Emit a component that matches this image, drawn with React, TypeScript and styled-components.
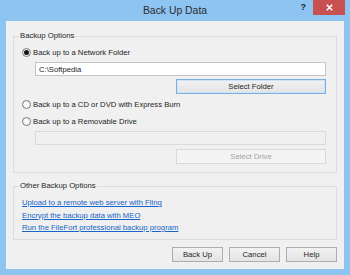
import React from "react";
import styled, { createGlobalStyle } from "styled-components";

const Global = createGlobalStyle`
  html, body { margin: 0; padding: 0; }
  body {
    width: 350px;
    height: 275px;
    overflow: hidden;
    background: #ffffff;
    font-family: "Liberation Sans", Arial, sans-serif;
  }
  * { box-sizing: border-box; }
`;

const Window = styled.div`
  width: 350px;
  height: 275px;
  background: #8ec4f2;
  display: flex;
  flex-direction: column;
  padding: 0 6px 6px 6px;
`;

const TitleBar = styled.div`
  height: 21px;
  flex: none;
  display: grid;
  grid-template-columns: 1fr auto 1fr;
  align-items: start;
`;

const Title = styled.div`
  grid-column: 2;
  font-size: 10.4px;
  line-height: 22px;
  color: #2c2c2c;
  white-space: nowrap;
`;

const Controls = styled.div`
  grid-column: 3;
  justify-self: end;
  display: flex;
  align-items: flex-start;
  margin-right: -1px;
`;

const HelpMark = styled.span`
  font-weight: bold;
  font-size: 9px;
  line-height: 15px;
  color: #1f1f1f;
  margin-right: 7px;
`;

const CloseBox = styled.div`
  width: 32px;
  height: 15px;
  background: #c75050;
  display: flex;
  align-items: center;
  justify-content: center;
`;

const Client = styled.div`
  flex: 1;
  background: #f0f0f0;
  padding: 10px 7px 7px 7px;
  display: flex;
  flex-direction: column;
`;

const Group = styled.fieldset<{ $gap?: number }>`
  margin: ${(p) => p.$gap ?? 0}px 0 0 0;
  min-width: 0;
  border: 1px solid #dcdcdc;
  padding: 0 10px ${(p) => (p.$gap ? 4.5 : 8)}px 8px;
  display: flex;
  flex-direction: column;
`;

const Legend = styled.legend`
  font-size: 7.7px;
  line-height: 10px;
  color: #1e1e1e;
  padding: 0 1px;
  margin-left: -3px;
`;

const RadioRow = styled.label<{ $top: number }>`
  margin-top: ${(p) => p.$top}px;
  height: 10px;
  display: flex;
  align-items: center;
  gap: 2px;
  font-size: 7.7px;
  color: #1e1e1e;
  white-space: nowrap;
`;

const Radio = styled.input`
  appearance: none;
  margin: 0;
  width: 9px;
  height: 9px;
  border-radius: 50%;
  border: 1px solid #7a7a7a;
  background: radial-gradient(circle, #ffffff 0%, #eaeaea 100%);
  display: grid;
  place-items: center;
  &:checked::after {
    content: "";
    width: 5px;
    height: 5px;
    border-radius: 50%;
    background: #111;
  }
`;

const TextBox = styled.input<{ $top: number }>`
  margin: ${(p) => p.$top}px 0 0 13px;
  height: 14px;
  padding: 0 3px;
  border: 1px solid ${(p) => (p.disabled ? "#dadada" : "#c4c4c4")};
  background: ${(p) => (p.disabled ? "#f0f0f0" : "#ffffff")};
  font-family: inherit;
  font-size: 7.7px;
  color: #1e1e1e;
  outline: none;
`;

const Button = styled.button<{ $default?: boolean; $wide?: boolean; $top?: number }>`
  margin: ${(p) => p.$top ?? 0}px 0 0 0;
  width: ${(p) => (p.$wide ? 150 : 51)}px;
  height: 15px;
  padding: 0;
  align-self: ${(p) => (p.$wide ? "flex-end" : "auto")};
  font-family: inherit;
  font-size: 7.7px;
  color: ${(p) => (p.disabled ? "#a3a3a3" : "#1e1e1e")};
  border: 1px solid
    ${(p) => (p.disabled ? "#d9d9d9" : p.$default ? "#78b0e6" : "#adadad")};
  background: ${(p) =>
    p.disabled ? "#f4f4f4" : "linear-gradient(#f2f2f2, #e4e4e4)"};
  box-shadow: ${(p) => (p.$default ? "inset 0 0 0 1px #cfe3f7" : "none")};
`;

const Link = styled.a`
  display: block;
  font-size: 7.7px;
  line-height: 12.5px;
  color: #1565c8;
  text-decoration: underline;
  white-space: nowrap;
`;

const Links = styled.div`
  margin-top: 6px;
  display: flex;
  flex-direction: column;
`;

const ButtonRow = styled.div`
  margin-top: 7px;
  display: flex;
  justify-content: flex-end;
  gap: 6px;
`;

const noop = () => {};

export default function App() {
  return (
    <>
      <Global />
      <Window>
        <TitleBar>
          <Title>Back Up Data</Title>
          <Controls>
            <HelpMark>?</HelpMark>
            <CloseBox>
              <svg width="7" height="7" viewBox="0 0 7 7">
                <path d="M0.8 0.8 L6.2 6.2 M6.2 0.8 L0.8 6.2" stroke="#fff" strokeWidth="1.6" />
              </svg>
            </CloseBox>
          </Controls>
        </TitleBar>
        <Client>
          <Group>
            <Legend>Backup Options</Legend>
            <RadioRow $top={6}>
              <Radio type="radio" name="dest" checked onChange={noop} />
              Back up to a Network Folder
            </RadioRow>
            <TextBox $top={5} value="C:\Softpedia" readOnly />
            <Button $wide $default $top={3}>Select Folder</Button>
            <RadioRow $top={5}>
              <Radio type="radio" name="dest" checked={false} onChange={noop} />
              Back up to a CD or DVD with Express Burn
            </RadioRow>
            <RadioRow $top={7}>
              <Radio type="radio" name="dest" checked={false} onChange={noop} />
              Back up to a Removable Drive
            </RadioRow>
            <TextBox $top={5} value="" disabled readOnly />
            <Button $wide disabled $top={4}>Select Drive</Button>
          </Group>
          <Group $gap={8}>
            <Legend>Other Backup Options</Legend>
            <Links>
              <Link href="#">Upload to a remote web server with Fling</Link>
              <Link href="#">Encrypt the backup data with MEO</Link>
              <Link href="#">Run the FileFort professional backup program</Link>
            </Links>
          </Group>
          <ButtonRow>
            <Button>Back Up</Button>
            <Button>Cancel</Button>
            <Button>Help</Button>
          </ButtonRow>
        </Client>
      </Window>
    </>
  );
}
